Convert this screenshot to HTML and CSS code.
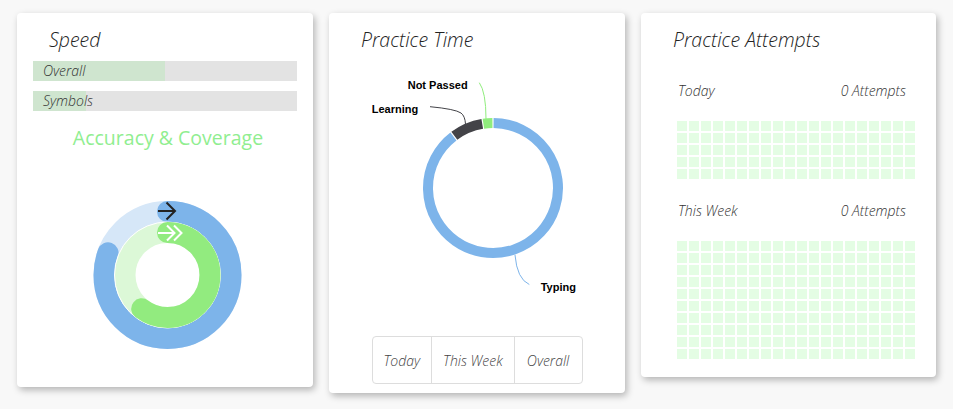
FILE: index.html
```html
<!DOCTYPE html>
<html>
<head>
<meta charset="utf-8">
<link rel="stylesheet" href="styles.css">
</head>
<body>
<div class="cards">
  <section class="card card-speed">
    <h2 class="title">Speed</h2>
    <div class="bar"><div class="fill" style="width:50%"></div><span class="bar-label">Overall</span></div>
    <div class="bar bar-second"><div class="fill" style="width:20%"></div><span class="bar-label">Symbols</span></div>
    <h3 class="accuracy">Accuracy &amp; Coverage</h3>
    <svg class="gauge" width="264" height="200" viewBox="0 0 264 200">
      <circle cx="134.5" cy="100" r="63.5" fill="none" stroke="#d6e7f8" stroke-width="21"/>
      <circle cx="134.5" cy="100" r="63.5" fill="none" stroke="#7db4ea" stroke-width="21" stroke-linecap="round" stroke-dasharray="321.5 500" transform="rotate(-90 134.5 100)"/>
      <circle cx="134.5" cy="100" r="42.5" fill="none" stroke="#dcf8d7" stroke-width="21"/>
      <circle cx="134.5" cy="100" r="53" fill="none" stroke="#ffffff" stroke-width="1"/>
      <circle cx="134.5" cy="100" r="42.5" fill="none" stroke="#92eb7f" stroke-width="21" stroke-linecap="round" stroke-dasharray="161 500" transform="rotate(-90 134.5 100)"/>
      <path d="M125 36 H142 M133.5 27.5 L142 36 L133.5 44.5" fill="none" stroke="#222" stroke-width="2"/>
      <path d="M125 58 H141 M134 50.5 L141.5 58 L134 65.5 M141 50.5 L148.5 58 L141 65.5" fill="none" stroke="#fff" stroke-width="2"/>
    </svg>
  </section>

  <section class="card card-time">
    <h2 class="title">Practice Time</h2>
    <svg class="pie" width="264" height="250" viewBox="0 0 264 250">
      <path d="M148.57 61 A65 65 0 1 1 108.43 74.43" fill="none" stroke="#7db4ea" stroke-width="10"/>
      <path d="M109.34 73.75 A65 65 0 0 1 137.27 61.89" fill="none" stroke="#434348" stroke-width="10"/>
      <path d="M138.39 61.72 A65 65 0 0 1 147.43 61" fill="none" stroke="#90ed7d" stroke-width="10"/>
      <path d="M134.3 20.7 Q141 30 141 57" fill="none" stroke="#90ed7d" stroke-width="1"/>
      <path d="M85 44.7 Q110 47 116 51 Q120 54 120.5 62" fill="none" stroke="#434348" stroke-width="1"/>
      <path d="M170 193 Q172 217 184.3 222.5" fill="none" stroke="#7db4ea" stroke-width="1"/>
      <text class="pie-label" x="62.7" y="27">Not Passed</text>
      <text class="pie-label" x="26.7" y="51">Learning</text>
      <text class="pie-label" x="195.7" y="229">Typing</text>
    </svg>
    <div class="range">
      <button class="range-btn">Today</button>
      <button class="range-btn">This Week</button>
      <button class="range-btn">Overall</button>
    </div>
  </section>

  <section class="card card-attempts">
    <h2 class="title">Practice Attempts</h2>
    <div class="row row-first"><span>Today</span><span>0 Attempts</span></div>
    <div class="grid" id="grid-today"></div>
    <div class="row row-second"><span>This Week</span><span>0 Attempts</span></div>
    <div class="grid" id="grid-week"></div>
  </section>
</div>
<script src="script.js"></script>
</body>
</html>
```

FILE: script.js
```js
function fill(id, n) {
  var g = document.getElementById(id);
  for (var i = 0; i < n; i++) {
    var c = document.createElement('div');
    c.className = 'cell';
    g.appendChild(c);
  }
}
fill('grid-today', 100);
fill('grid-week', 200);
```

FILE: styles.css
```css
* { box-sizing: border-box; }
body {
  margin: 0;
  padding: 13px 17px;
  background: #f8f8f8;
  font-family: "Open Sans", "Liberation Sans", sans-serif;
  color: #333;
}
.cards {
  display: flex;
  align-items: flex-start;
  gap: 16px;
}
.card {
  width: 296px;
  background: #fff;
  border-radius: 4px;
  box-shadow: 2px 3px 7px rgba(0, 0, 0, 0.28);
  padding: 13px 16px 12px;
}
.title {
  margin: 0;
  padding-left: 16px;
  font-size: 19.5px;
  line-height: 28px;
  font-style: italic;
  font-weight: 300;
  color: #222;
}
.bar {
  position: relative;
  height: 20px;
  background: #e3e3e3;
  margin-top: 7px;
}
.bar-second { margin-top: 10px; }
.fill {
  height: 100%;
  background: #cfe5cf;
}
.bar-label {
  position: absolute;
  left: 10px;
  top: 0;
  font-size: 14px;
  line-height: 20px;
  font-style: italic;
  font-weight: 300;
  color: #333;
}
.accuracy {
  margin: 13px 0 0;
  text-align: center;
  font-size: 19.5px;
  line-height: 28px;
  font-weight: 400;
  color: #90ee90;
  padding-left: 6px;
}
.gauge {
  display: block;
  margin-top: 23px;
}
.pie {
  display: block;
  margin-top: 8px;
}
.pie-label {
  font-family: "Liberation Sans", Arial, sans-serif;
  font-size: 11px;
  font-weight: 700;
  fill: #000;
}
.card-time { padding-bottom: 9px; }
.range {
  display: flex;
  width: 211px;
  height: 48px;
  margin: 24px auto 0;
  border: 1px solid #dddddd;
  border-radius: 4px;
}
.range-btn {
  flex: none;
  border: 0;
  border-left: 1px solid #dddddd;
  background: transparent;
  padding: 0 11px;
  font-family: "Open Sans", sans-serif;
  font-size: 14px;
  font-style: italic;
  font-weight: 300;
  color: #444;
}
.range-btn:first-child { border-left: 0; }
.range-btn:last-child { flex: 1; }
.card-attempts { padding-bottom: 18px; }
.row {
  display: flex;
  justify-content: space-between;
  padding: 0 14px 0 21px;
  font-size: 14px;
  line-height: 20px;
  font-style: italic;
  font-weight: 300;
  color: #333;
}
.row-first { margin-top: 27px; }
.row-second { margin-top: 22px; }
.grid {
  display: grid;
  grid-template-columns: repeat(20, 10px);
  grid-auto-rows: 10px;
  gap: 2px;
  margin: 20px 0 0 20px;
}
.cell { background: #e4fde4; }
```
